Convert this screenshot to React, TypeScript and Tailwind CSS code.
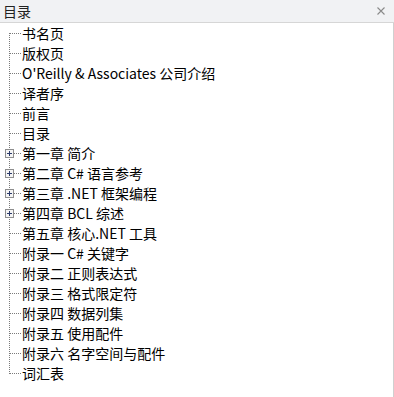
import React from 'react';

type Item = { title: string; expandable?: boolean };

const items: Item[] = [
    { title: '书名页' },
    { title: '版权页' },
    { title: "O'Reilly & Associates 公司介绍" },
    { title: '译者序' },
    { title: '前言' },
    { title: '目录' },
    { title: '第一章 简介', expandable: true },
    { title: '第二章 C# 语言参考', expandable: true },
    { title: '第三章 .NET 框架编程', expandable: true },
    { title: '第四章 BCL 综述', expandable: true },
    { title: '第五章 核心.NET 工具' },
    { title: '附录一 C# 关键字' },
    { title: '附录二 正则表达式' },
    { title: '附录三 格式限定符' },
    { title: '附录四 数据列集' },
    { title: '附录五 使用配件' },
    { title: '附录六 名字空间与配件' },
    { title: '词汇表' },
];

// Tree connector: dotted lines plus optional expander box
const Connector = ({ first, last, expandable }: { first: boolean; last: boolean; expandable?: boolean }) => (
    <svg width="22" height="20" viewBox="0 0 22 20" className="shrink-0" shapeRendering="crispEdges">
        <line x1="9.5" y1={first ? 10 : 0} x2="9.5" y2={last ? 11 : 20} stroke="#7a7a7a" strokeDasharray="1 1" />
        <line x1={expandable ? 14 : 10} y1="10.5" x2="21" y2="10.5" stroke="#7a7a7a" strokeDasharray="1 1" />
        {expandable && (
            <>
                <rect x="5.5" y="6.5" width="8" height="8" fill="#f4f4f4" stroke="#8e8e8e" />
                <line x1="7" y1="10.5" x2="12" y2="10.5" stroke="#2b3a6a" />
                <line x1="9.5" y1="8" x2="9.5" y2="13" stroke="#2b3a6a" />
            </>
        )}
    </svg>
);

export default function App() {
    return (
        <div
            className="w-[394px] h-[397px] flex flex-col bg-white text-[14px] text-black"
            style={{ fontFamily: '"Noto Sans CJK SC", "Noto Sans", sans-serif' }}
        >
            <div className="h-[23px] shrink-0 flex items-center justify-between pl-[3px] pr-[9px] bg-[#f1f2f4] border-b border-[#d6d6d6]">
                <span className="text-[14px] text-[#222] leading-none">目录</span>
                <svg width="8" height="8" viewBox="0 0 8 8">
                    <path d="M0.5 0.5L7.5 7.5M7.5 0.5L0.5 7.5" stroke="#8a8a8a" strokeWidth="1.1" />
                </svg>
            </div>
            <div className="flex-1 border-r border-[#d0d0d0]">
                {items.map((item, i) => (
                    <div key={i} className="h-[20px] flex items-center">
                        <Connector first={i === 0} last={i === items.length - 1} expandable={item.expandable} />
                        <span className="leading-[20px] whitespace-nowrap">{item.title}</span>
                    </div>
                ))}
            </div>
        </div>
    );
}
